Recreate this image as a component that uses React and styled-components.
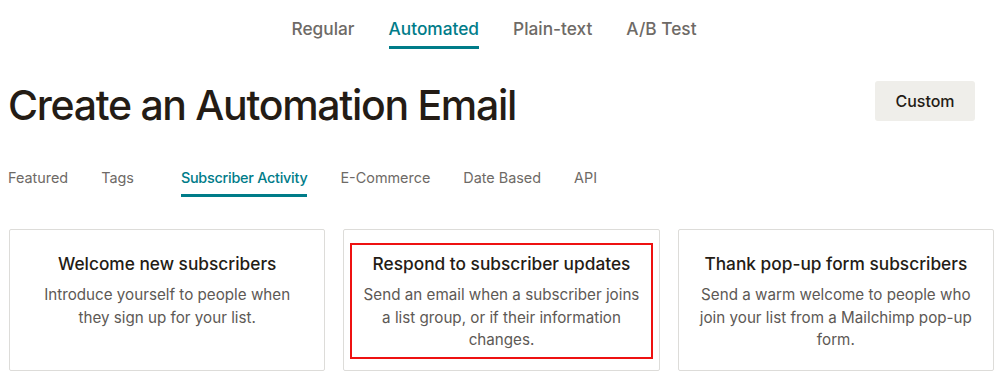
import styled, { createGlobalStyle } from 'styled-components';

const GlobalStyle = createGlobalStyle`
  html, body {
    margin: 0;
    padding: 0;
    background: #ffffff;
  }
  body {
    font-family: 'Inter', 'Liberation Sans', sans-serif;
    color: #241c15;
  }
`;

const Page = styled.div`
  width: 986px;
  padding: 0 9px 0 8px;
`;

const TypeTabs = styled.nav`
  display: flex;
  justify-content: center;
  gap: 34px;
  padding: 17px 0 0 0;
  margin-right: 14px;
`;

const TypeTab = styled.div`
  font-size: 17.3px;
  font-weight: 500;
  line-height: 24px;
  padding-bottom: 5px;
  color: ${p => (p.$active ? '#007c89' : '#6e6a66')};
  border-bottom: 3px solid ${p => (p.$active ? '#007c89' : 'transparent')};
`;

const Header = styled.header`
  display: flex;
  align-items: center;
  justify-content: space-between;
  margin-top: 26px;
`;

const Title = styled.h1`
  margin: 0;
  font-size: 41px;
  font-weight: 500;
  line-height: 56px;
  letter-spacing: -1.3px;
  color: #241c15;
  transform: translateY(2px);
`;

const CustomButton = styled.button`
  font-family: inherit;
  width: 100px;
  height: 40px;
  margin-right: 19px;
  margin-bottom: 4px;
  border: none;
  border-radius: 3px;
  background: #efeeea;
  color: #241c15;
  font-size: 16px;
  font-weight: 500;
`;

const CategoryTabs = styled.nav`
  display: flex;
  gap: 33px;
  margin-top: 37px;
`;

const CategoryTab = styled.div`
  font-size: 14.4px;
  line-height: 20px;
  padding-bottom: 6px;
  color: ${p => (p.$active ? '#007c89' : '#6e6a66')};
  font-weight: ${p => (p.$active ? 500 : 400)};
  letter-spacing: ${p => (p.$active ? '-0.25px' : '0')};
  border-bottom: 3px solid ${p => (p.$active ? '#007c89' : 'transparent')};
  margin-left: ${p => p.$extra || 0}px;
`;

const Cards = styled.div`
  display: grid;
  grid-template-columns: repeat(3, 1fr);
  gap: 18px;
  margin-top: 32px;
  padding-left: 1px;
`;

const Card = styled.div`
  border: 1px solid #dddcd9;
  border-radius: 2px;
  height: 142px;
  padding: 15px 8px;
  box-sizing: border-box;
`;

const CardBody = styled.div`
  text-align: center;
  padding: 7px 10px 5px;
  outline: ${p => (p.$highlight ? '2px solid #ee1111' : 'none')};
  outline-offset: 0;
`;

const CardTitle = styled.h3`
  margin: 0 0 8px;
  font-size: 17.3px;
  font-weight: 500;
  line-height: 24px;
  color: #241c15;
`;

const CardText = styled.p`
  margin: 0;
  font-size: 15.2px;
  font-weight: 400;
  line-height: 22.5px;
  color: #5d5955;
`;

const typeTabs = ['Regular', 'Automated', 'Plain-text', 'A/B Test'];
const categories = [
  { label: 'Featured' },
  { label: 'Tags' },
  { label: 'Subscriber Activity', active: true, extra: 14 },
  { label: 'E-Commerce' },
  { label: 'Date Based' },
  { label: 'API' },
];
const cards = [
  {
    title: 'Welcome new subscribers',
    text: 'Introduce yourself to people when they sign up for your list.',
  },
  {
    title: 'Respond to subscriber updates',
    text: 'Send an email when a subscriber joins a list group, or if their information changes.',
    highlight: true,
  },
  {
    title: 'Thank pop-up form subscribers',
    text: 'Send a warm welcome to people who join your list from a Mailchimp pop-up form.',
  },
];

export default function App() {
  return (
    <>
      <GlobalStyle />
      <Page>
        <TypeTabs>
          {typeTabs.map(t => (
            <TypeTab key={t} $active={t === 'Automated'}>
              {t}
            </TypeTab>
          ))}
        </TypeTabs>
        <Header>
          <Title>Create an Automation Email</Title>
          <CustomButton>Custom</CustomButton>
        </Header>
        <CategoryTabs>
          {categories.map(c => (
            <CategoryTab key={c.label} $active={c.active} $extra={c.extra}>
              {c.label}
            </CategoryTab>
          ))}
        </CategoryTabs>
        <Cards>
          {cards.map(card => (
            <Card key={card.title}>
              <CardBody $highlight={card.highlight}>
                <CardTitle>{card.title}</CardTitle>
                <CardText>{card.text}</CardText>
              </CardBody>
            </Card>
          ))}
        </Cards>
      </Page>
    </>
  );
}
